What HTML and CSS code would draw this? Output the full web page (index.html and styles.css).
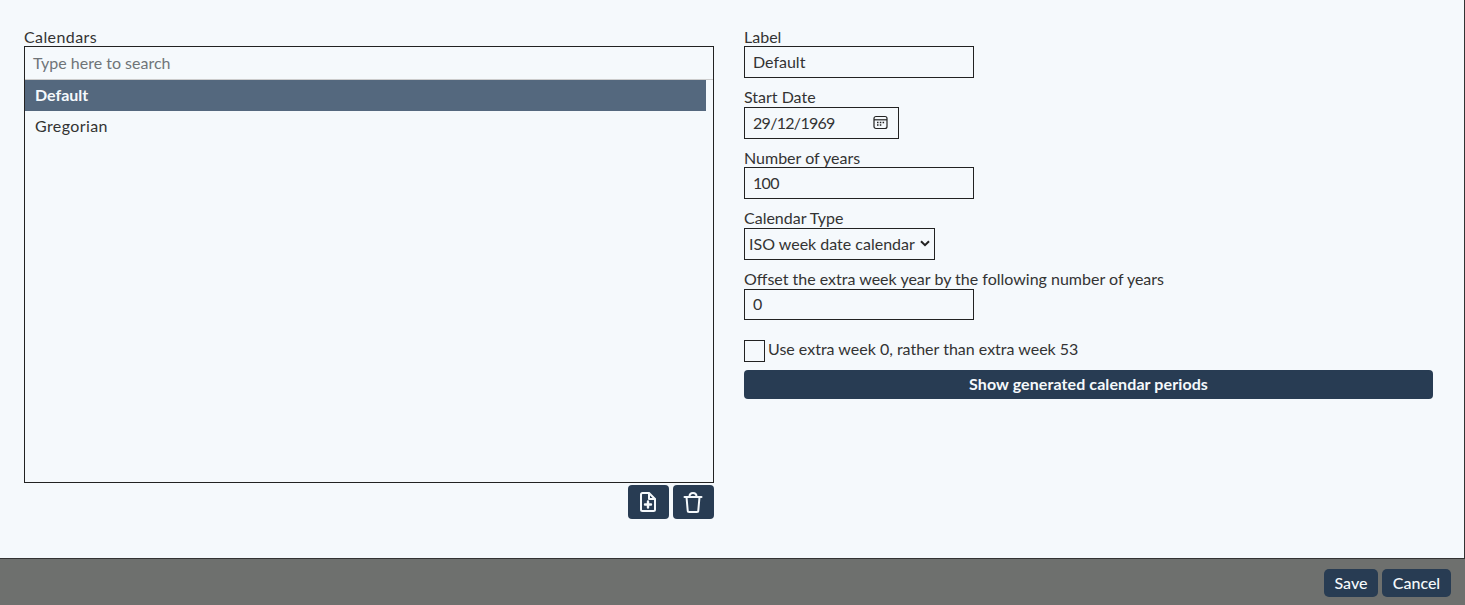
FILE: index.html
```html
<!DOCTYPE html>
<html lang="en">
<head>
<meta charset="utf-8">
<title>Calendars</title>
<link rel="stylesheet" href="styles.css">
</head>
<body>
<main class="content">
  <section class="left">
    <div class="label stretch">Calendars</div>
    <div class="listbox">
      <div class="search">Type here to search</div>
      <ul class="items">
        <li class="item selected">Default</li>
        <li class="item stretch">Gregorian</li>
      </ul>
    </div>
    <div class="tools">
      <button class="icon-btn" aria-label="Add">
        <svg width="16" height="20" viewBox="0 0 16 20" fill="none" stroke="#f5f9fc" stroke-width="2" stroke-linejoin="round" stroke-linecap="round"><path d="M2.500 1h6.500L15 7v10.500a1.500 1.500 0 0 1-1.500 1.500h-11A1.500 1.500 0 0 1 1 17.500v-15A1.500 1.500 0 0 1 2.500 1z"/><path d="M9 1.500V7h5.500"/><path d="M8 9.500v6M5 12.500h6" stroke-width="2.400"/></svg>
      </button>
      <button class="icon-btn" aria-label="Delete">
        <svg width="20" height="21" viewBox="0 0 20 21" fill="none" stroke="#f5f9fc" stroke-width="2" stroke-linejoin="round" stroke-linecap="round"><path d="M1.500 5h17"/><path d="M6.500 4.500C6.500 2 8 1 10 1s3.500 1 3.500 3.500"/><path d="M3.500 5l1.200 13.500A1.500 1.500 0 0 0 6.200 20h7.600a1.500 1.500 0 0 0 1.500-1.500L16.500 5"/></svg>
      </button>
    </div>
  </section>
  <section class="right">
    <div class="field gap-12"><div class="label">Label</div><div class="box wide">Default</div></div>
    <div class="field"><div class="label lift">Start Date</div><div class="box date"><span class="condensed">29/12/1969</span>
      <svg class="cal" width="15" height="15" viewBox="0 0 15 15" fill="none" stroke="#222" stroke-width="1.200"><rect x="1" y="1.500" width="13" height="12" rx="2"/><path d="M1 4.800h13"/><path d="M4 7.500h1.500M6.800 7.500h1.500M9.600 7.500h1.500M4 10h1.500M6.800 10h1.500" stroke-width="1.500"/></svg></div></div>
    <div class="field gap-12"><div class="label">Number of years</div><div class="box wide"><span class="condensed">100</span></div></div>
    <div class="field gap-12"><div class="label lift">Calendar Type</div><div class="box select">ISO week date calendar
      <svg width="10" height="7" viewBox="0 0 10 7" fill="none" stroke="#222" stroke-width="2"><path d="M1 1.200l4 4 4-4"/></svg></div></div>
    <div class="field"><div class="label lift">Offset the extra week year by the following number of years</div><div class="box wide short">0</div></div>
    <div class="check-row"><span class="check"></span><span class="check-text">Use extra week 0, rather than extra week 53</span></div>
    <button class="wide-btn">Show generated calendar periods</button>
  </section>
</main>
<footer class="footer">
  <button class="foot-btn save">Save</button>
  <button class="foot-btn cancel">Cancel</button>
</footer>
</body>
</html>
```
FILE: styles.css
```css
* { box-sizing: border-box; }
html, body { margin: 0; height: 100%; }
body {
  background: #f5f9fc;
  color: #333;
  font-family: "Lato", "Liberation Sans", sans-serif;
  font-size: 16px;
  line-height: 18px;
  width: 1465px;
  height: 605px;
  overflow: hidden;
  display: flex;
  flex-direction: column;
}
.content { height: 558px; display: flex; padding: 29px 31px 0 24px; gap: 30px; border-right: 1px solid #333; }
.left { width: 690px; }
.right { flex: 1; }
.label { height: 17px; line-height: 16px; white-space: nowrap; }
.lift { line-height: 14px; }
.stretch { letter-spacing: .4px; }
.condensed { letter-spacing: -.7px; }
.listbox { height: 437px; border: 1px solid #222; }
.search { height: 33px; padding: 0 8px; line-height: 31px; color: #6f7478; border-bottom: 1px solid #ccc; }
.items { list-style: none; margin: 0; padding: 0 7px 0 0; }
.item { height: 31px; line-height: 29px; padding: 0 10px; }
.selected { background: #54687e; color: #f5f9fc; font-weight: 700; }
.tools { display: flex; justify-content: flex-end; gap: 4px; margin-top: 2px; }
.icon-btn { width: 41px; height: 34px; border: 0; border-radius: 4px; background: #283c53; display: flex; align-items: center; justify-content: center; padding: 0 1px 0 0; }
.field { margin-bottom: 11px; }
.gap-12 { margin-bottom: 12px; }
.box { height: 32px; border: 1px solid #222; padding: 0 8px 1px; display: flex; align-items: center; }
.wide { width: 230px; }
.short { height: 31px; padding-bottom: 2px; }
.date { width: 155px; justify-content: space-between; padding-right: 10px; }
.select { width: 191px; padding: 0 4px 1px; justify-content: space-between; }
.check-row { display: flex; align-items: center; gap: 3px; margin-top: 20px; height: 22px; }
.check-text { padding-bottom: 4px; }
.check { width: 21px; height: 22px; border: 1px solid #222; }
.wide-btn { display: block; width: 100%; height: 29px; margin-top: 8px; padding: 0 0 2px; border: 0; border-radius: 4px; background: #283c53; color: #f5f9fc; font: 700 16px "Lato", sans-serif; letter-spacing: .1px; }
.footer { height: 47px; background: #6e706e; border-top: 1px solid #333; display: flex; justify-content: flex-end; align-items: flex-start; gap: 4px; padding: 10px 14px 0 0; }
.foot-btn { height: 28px; border: 0; border-radius: 5px; background: #283c53; color: #f5f9fc; font: 500 16px "Lato", sans-serif; padding: 0 0 2px; }
.save { width: 54px; }
.cancel { width: 69px; }
```
